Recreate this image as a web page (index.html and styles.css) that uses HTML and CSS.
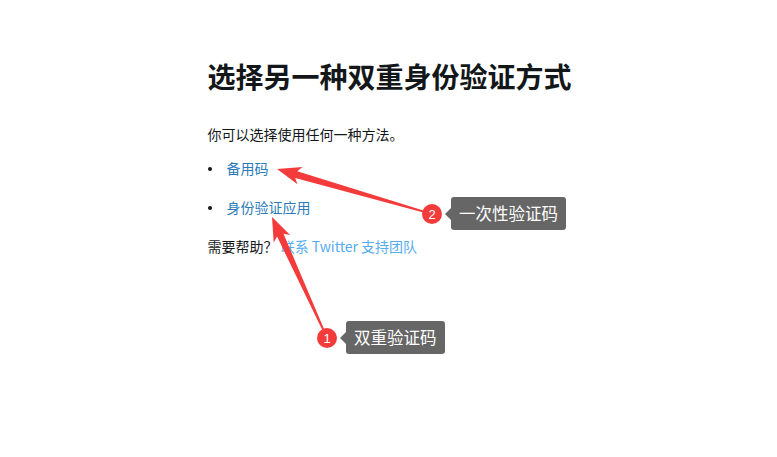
FILE: index.html
```html
<!DOCTYPE html>
<html lang="zh-CN">
<head>
  <meta charset="UTF-8" />
  <meta name="viewport" content="width=device-width, initial-scale=1.0"/>
  <title>选择另一种双重身份验证方式</title>
  <link rel="stylesheet" href="styles.css">
</head>
<body>
  <main class="contenido">
    <h1>选择另一种双重身份验证方式</h1>
    <p>你可以选择使用任何一种方法。</p>
    <ul class="metodos">
      <li><a href="#">备用码</a></li>
      <li><a href="#">身份验证应用</a></li>
    </ul>
    <p class="ayuda">需要帮助？ <a href="#">联系 Twitter 支持团队</a></p>
  </main>

  <!-- anotaciones encima del contenido -->
  <svg class="flechas" width="777" height="457" viewBox="0 0 777 457">
    <polygon fill="#f43b3b" points="277,169 302.5,167.1 297.2,171.2 432.2,213.2 431.8,214.8 295.2,178 297.5,184.3"/>
    <polygon fill="#f43b3b" points="272,217 290.1,235.1 283.5,233.8 327.7,337.7 326.3,338.3 277.1,236.6 273.7,242.5"/>
    <circle cx="432" cy="214" r="10" fill="#f43b3b"/>
    <circle cx="327" cy="338" r="10" fill="#f43b3b"/>
    <text x="432" y="218.5" class="num">2</text>
    <text x="327" y="342.5" class="num">1</text>
  </svg>
  <div class="etiqueta etiqueta-2">一次性验证码</div>
  <div class="etiqueta etiqueta-1">双重验证码</div>
</body>
</html>
```

FILE: styles.css
```css
body {
  font-family: "Noto Sans CJK SC", "Liberation Sans", sans-serif;
  background: #fff;
  color: #14171a;
  margin: 0;
  padding: 0;
  position: relative;
  width: 777px;
  height: 457px;
  overflow: hidden;
}
.contenido {
  width: 362px;
  margin: 0 auto;
  padding-top: 54px;
  font-size: 14px;
}
h1 {
  font-size: 28px;
  font-weight: 700;
  line-height: 44px;
  margin: 0 0 24px;
  white-space: nowrap;
}
p {
  margin: 0;
  line-height: 24px;
}
a {
  color: #2b7bb9;
  text-decoration: none;
}
.metodos {
  list-style: none;
  margin: 10px 0 0;
  padding: 0;
}
.metodos li {
  position: relative;
  padding-left: 19px;
  line-height: 24px;
  margin-bottom: 15px;
}
.metodos li::before {
  content: "";
  position: absolute;
  left: 0;
  top: 11px;
  width: 4px;
  height: 4px;
  border-radius: 50%;
  background: #14171a;
}
.ayuda {
  margin-top: 0;
}
.ayuda a {
  color: #55acee;
}
.flechas {
  position: absolute;
  left: 0;
  top: 0;
}
.num {
  fill: #fff;
  font-size: 13px;
  text-anchor: middle;
  font-family: "Liberation Sans", sans-serif;
}
.etiqueta {
  position: absolute;
  background: #666;
  color: #fff;
  font-size: 16.5px;
  line-height: 33px;
  height: 33px;
  padding: 0 8px;
  border-radius: 3px;
  white-space: nowrap;
}
.etiqueta::before {
  content: "";
  position: absolute;
  left: -6px;
  top: 11px;
  border-top: 6px solid transparent;
  border-bottom: 6px solid transparent;
  border-right: 6px solid #666;
}
.etiqueta-2 {
  left: 451px;
  top: 197px;
}
.etiqueta-1 {
  left: 346px;
  top: 321px;
}
```
